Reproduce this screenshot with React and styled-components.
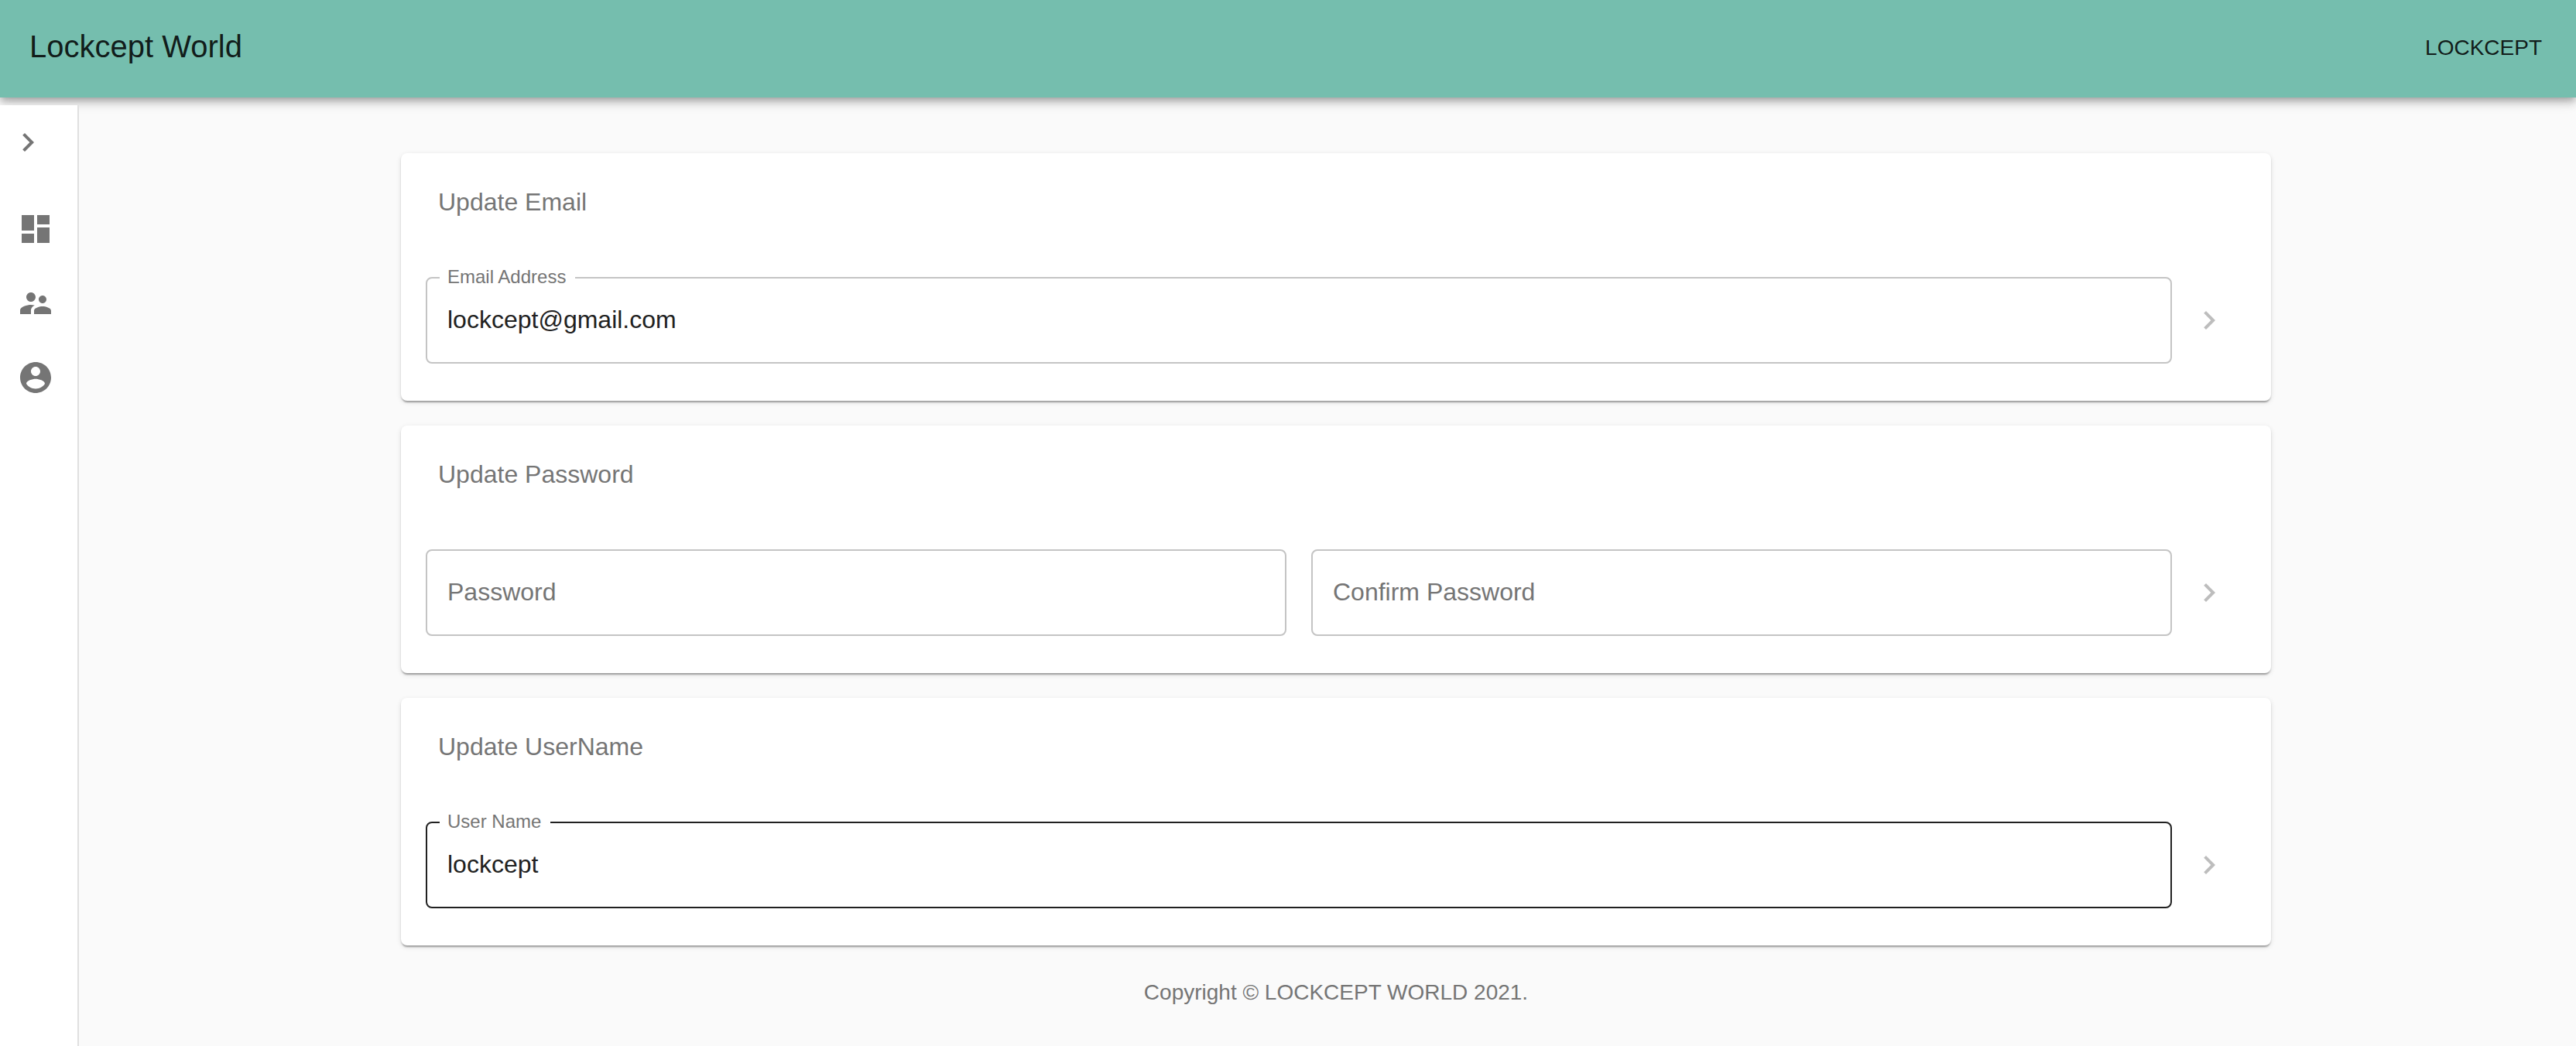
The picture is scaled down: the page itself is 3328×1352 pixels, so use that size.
import React, { useState } from "react";
import styled, { createGlobalStyle } from "styled-components";

const GlobalStyle = createGlobalStyle`
  *, *::before, *::after { box-sizing: border-box; }
  body {
    margin: 0;
    background: #fafafa;
    color: rgba(0, 0, 0, 0.87);
    font-family: "Liberation Sans", Helvetica, Arial, sans-serif;
    font-size: 32px;
    line-height: 48px;
  }
`;

const Page = styled.div`
  display: flex;
  flex-direction: column;
  min-height: 100vh;
`;

const TopBar = styled.header`
  display: flex;
  align-items: center;
  justify-content: space-between;
  min-height: 126px;
  padding: 0 44px 6px 38px;
  background: #75beae;
  box-shadow:
    0 4px 8px -2px rgba(0, 0, 0, 0.2),
    0 8px 10px 0 rgba(0, 0, 0, 0.14),
    0 2px 20px 0 rgba(0, 0, 0, 0.12);
`;

const Brand = styled.h1`
  margin: 0;
  font-size: 40px;
  font-weight: 400;
  line-height: 64px;
`;

const AccountButton = styled.button`
  padding: 4px 0 0;
  border: 0;
  background: none;
  color: inherit;
  font: inherit;
  font-size: 28px;
  line-height: 40px;
  text-transform: uppercase;
  cursor: pointer;
`;

const Body = styled.div`
  display: flex;
  flex: 1;
  padding-top: 10px;
`;

const Sidebar = styled.aside`
  position: relative;
  display: flex;
  flex: none;
  flex-direction: column;
  width: 102px;
  background: #fff;
  border-right: 2px solid #e0e0e0;
`;

const IconButton = styled.button`
  display: flex;
  align-items: center;
  justify-content: center;
  flex: none;
  width: 96px;
  height: 96px;
  padding: 0;
  border: 0;
  background: none;
  color: #757575;
  &:disabled { color: #bdbdbd; }
`;

const ToggleButton = styled(IconButton)`
  justify-content: flex-start;
  padding-left: 12px;
`;

const NavList = styled.nav`
  display: flex;
  flex-direction: column;
  padding: 16px 0;
`;

const NavLink = styled.a`
  display: flex;
  padding: 24px 22px;
  color: #757575;
`;

const Glyph = styled.svg`
  display: block;
  width: 48px;
  height: 48px;
  fill: currentColor;
`;

const Main = styled.main`
  display: flex;
  flex: 1;
  flex-direction: column;
  align-items: center;
  gap: 32px;
  min-width: 0;
  padding: 62px 0 32px 22px;
`;

const Card = styled.form`
  width: 100%;
  max-width: 2416px;
  padding: 39px 32px 48px;
  border-radius: 8px;
  background: #fff;
  box-shadow:
    0 4px 2px -2px rgba(0, 0, 0, 0.2),
    0 2px 2px 0 rgba(0, 0, 0, 0.14),
    0 2px 6px 0 rgba(0, 0, 0, 0.12);
`;

const CardTitle = styled.h2`
  margin: 0 0 73px;
  padding: 0 16px;
  color: #757575;
  font-size: 32px;
  font-weight: 400;
  line-height: 48px;
`;

const FieldRow = styled.div`
  display: flex;
  align-items: center;
`;

const Fields = styled.div`
  display: flex;
  flex: 1;
  gap: 32px;
  min-width: 0;
`;

const FieldBox = styled.div`
  position: relative;
  flex: 1;
  min-width: 0;
`;

const Input = styled.input`
  display: block;
  width: 100%;
  height: 112px;
  padding: 0 26px 2px;
  border: 2px solid ${(p) => (p.$strong ? "#212121" : "#c4c4c4")};
  border-radius: 8px;
  outline: 0;
  background: transparent;
  color: #212121;
  font: inherit;
`;

const Label = styled.label`
  position: absolute;
  top: ${(p) => (p.$raised ? "-16px" : "31px")};
  left: 18px;
  padding: 0 12px 0 10px;
  background: #fff;
  color: #757575;
  font-size: ${(p) => (p.$raised ? "24px" : "32px")};
  line-height: ${(p) => (p.$raised ? "32px" : "48px")};
  pointer-events: none;
`;

const Copyright = styled.footer`
  padding-top: 9px;
  color: #757575;
  font-size: 28px;
  line-height: 40px;
`;

const paths = {
  chevron: "M10 6L8.59 7.41 13.17 12l-4.58 4.59L10 18l6-6z",
  dashboard: "M3 13h8V3H3v10zm0 8h8v-6H3v6zm10 0h8V11h-8v10zm0-18v6h8V3h-8z",
  people:
    "M16.5 12c1.38 0 2.49-1.12 2.49-2.5S17.88 7 16.5 7C15.12 7 14 8.12 14 9.5s1.12 2.5 2.5 2.5zM9 11c1.66 0 2.99-1.34 2.99-3S10.66 5 9 5C7.34 5 6 6.34 6 8s1.34 3 3 3zm7.5 3c-1.83 0-5.5.92-5.5 2.75V19h11v-2.25c0-1.83-3.67-2.75-5.5-2.75zM9 13c-2.33 0-7 1.17-7 3.5V19h7v-2.25c0-.85.33-2.34 2.37-3.47C10.5 13.1 9.66 13 9 13z",
  account:
    "M12 2C6.48 2 2 6.48 2 12s4.48 10 10 10 10-4.48 10-10S17.52 2 12 2zm0 3c1.66 0 3 1.34 3 3s-1.34 3-3 3-3-1.34-3-3 1.34-3 3-3zm0 14.2c-2.5 0-4.71-1.28-6-3.22.03-1.99 4-3.08 6-3.08 1.99 0 5.97 1.09 6 3.08-1.29 1.94-3.5 3.22-6 3.22z",
};

function Icon({ name }) {
  return (
    <Glyph viewBox="0 0 24 24" aria-hidden="true">
      <path d={paths[name]} />
    </Glyph>
  );
}

function Field({ id, label, type = "text", initial = "", strong }) {
  const [value, setValue] = useState(initial);
  return (
    <FieldBox>
      <Input
        id={id}
        type={type}
        value={value}
        $strong={strong}
        autoComplete="off"
        onChange={(e) => setValue(e.target.value)}
      />
      <Label htmlFor={id} $raised={value !== ""}>
        {label}
      </Label>
    </FieldBox>
  );
}

function UpdateCard({ title, children }) {
  return (
    <Card onSubmit={(e) => e.preventDefault()}>
      <CardTitle>{title}</CardTitle>
      <FieldRow>
        <Fields>{children}</Fields>
        <IconButton type="submit" disabled aria-label={title}>
          <Icon name="chevron" />
        </IconButton>
      </FieldRow>
    </Card>
  );
}

const navItems = [
  { icon: "dashboard", label: "Dashboard" },
  { icon: "people", label: "Users" },
  { icon: "account", label: "Account" },
];

export default function App() {
  return (
    <Page>
      <GlobalStyle />
      <TopBar>
        <Brand>Lockcept World</Brand>
        <AccountButton type="button">Lockcept</AccountButton>
      </TopBar>
      <Body>
        <Sidebar>
          <ToggleButton type="button" aria-label="Open menu">
            <Icon name="chevron" />
          </ToggleButton>
          <NavList>
            {navItems.map((item) => (
              <NavLink key={item.icon} href={`#${item.icon}`} aria-label={item.label}>
                <Icon name={item.icon} />
              </NavLink>
            ))}
          </NavList>
        </Sidebar>
        <Main>
          <UpdateCard title="Update Email">
            <Field id="email" type="text" label="Email Address" initial="lockcept@gmail.com" />
          </UpdateCard>
          <UpdateCard title="Update Password">
            <Field id="password" type="password" label="Password" />
            <Field id="confirm-password" type="password" label="Confirm Password" />
          </UpdateCard>
          <UpdateCard title="Update UserName">
            <Field id="user-name" label="User Name" initial="lockcept" strong />
          </UpdateCard>
          <Copyright>Copyright © LOCKCEPT WORLD 2021.</Copyright>
        </Main>
      </Body>
    </Page>
  );
}
